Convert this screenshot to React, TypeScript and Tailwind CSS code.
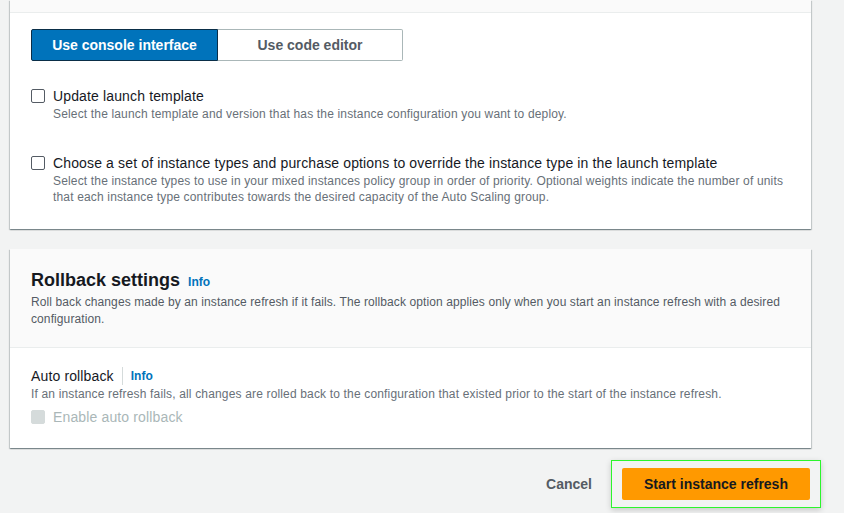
import React from 'react';

const font = { fontFamily: '"Liberation Sans", Arial, sans-serif' };

const Checkbox = ({ disabled = false }: { disabled?: boolean }) => (
  <span
    className={`mt-[3px] inline-block h-[14px] w-[14px] shrink-0 rounded-[2px] border ${
      disabled ? 'border-[#d5dbdb] bg-[#d5dbdb]' : 'border-[#545b64] bg-white'
    }`}
  />
);

const Info = () => (
  <a className="text-[12px] font-bold text-[#0073bb]">Info</a>
);

export default function App() {
  return (
    <div className="min-h-screen bg-[#f2f3f3] pl-[10px] pr-[33px] text-[#16191f]" style={font}>
      {/* Launch template panel */}
      <div className="bg-white shadow-[0_1px_1px_0_rgba(0,28,36,0.3),1px_1px_1px_0_rgba(0,28,36,0.15),-1px_1px_1px_0_rgba(0,28,36,0.15)]">
        <div className="h-[13px] border-b border-[#eaeded] bg-[#fafafa]" />
        <div className="px-[21px] pb-[24px] pt-[16px]">
          <div className="flex h-[32px] w-[372px] text-[14px] font-bold">
            <button className="w-[187px] rounded-l-[2px] border border-[#0a2e48] bg-[#0073bb] text-white">
              Use console interface
            </button>
            <button className="flex-1 rounded-r-[2px] border border-l-0 border-[#aab7b8] bg-white text-[#545b64]">
              Use code editor
            </button>
          </div>

          <div className="mt-[25px] flex gap-[8px]">
            <Checkbox />
            <div>
              <div className="text-[14px] leading-[20px] tracking-[0.14px]">Update launch template</div>
              <div className="text-[12px] leading-[16px] tracking-[0.16px] text-[#687078]">
                Select the launch template and version that has the instance configuration you want to deploy.
              </div>
            </div>
          </div>

          <div className="mt-[31px] flex gap-[8px]">
            <Checkbox />
            <div>
              <div className="text-[14px] leading-[20px] tracking-[0.14px]">
                Choose a set of instance types and purchase options to override the instance type in the launch template
              </div>
              <div className="text-[12px] leading-[16px] tracking-[0.16px] text-[#687078]">
                Select the instance types to use in your mixed instances policy group in order of priority. Optional weights indicate the number of units
                <br />
                that each instance type contributes towards the desired capacity of the Auto Scaling group.
              </div>
            </div>
          </div>
        </div>
      </div>

      {/* Rollback settings panel */}
      <div className="mt-[20px] bg-white shadow-[0_1px_1px_0_rgba(0,28,36,0.3),1px_1px_1px_0_rgba(0,28,36,0.15),-1px_1px_1px_0_rgba(0,28,36,0.15)]">
        <div className="border-b border-[#eaeded] bg-[#fafafa] px-[21px] pb-[19px] pt-[19px]">
          <div className="flex items-baseline gap-[8px]">
            <h2 className="text-[18px] font-bold leading-[24px]">Rollback settings</h2>
            <Info />
          </div>
          <p className="mt-[2px] text-[12px] leading-[17px] tracking-[0.1px] text-[#545b64]">
            Roll back changes made by an instance refresh if it fails. The rollback option applies only when you start an instance refresh with a desired
            <br />
            configuration.
          </p>
        </div>
        <div className="px-[21px] pb-[21px] pt-[18px]">
          <div className="flex items-center">
            <span className="text-[14px] leading-[20px] tracking-[0.14px]">Auto rollback</span>
            <span className="mx-[8px] h-[18px] w-px bg-[#d5dbdb]" />
            <Info />
          </div>
          <div className="text-[12px] leading-[16px] tracking-[0.16px] text-[#687078]">
            If an instance refresh fails, all changes are rolled back to the configuration that existed prior to the start of the instance refresh.
          </div>
          <div className="mt-[5px] flex gap-[8px]">
            <Checkbox disabled />
            <span className="text-[14px] leading-[20px] tracking-[0.14px] text-[#aab7b8]">Enable auto rollback</span>
          </div>
        </div>
      </div>

      {/* Footer actions */}
      <div className="mt-[12px] flex items-center justify-end gap-[19px] pb-[6px]">
        <button className="text-[14px] font-bold text-[#545b64]">Cancel</button>
        <div className="-mr-[10px] border-[1.5px] border-[#2cf52c] px-[10px] py-[7px] shadow-[0_2px_6px_rgba(0,0,0,0.18)]">
          <button className="h-[32px] w-[188px] rounded-[2px] bg-[#ff9900] text-[14px] font-bold text-[#16191f]">
            Start instance refresh
          </button>
        </div>
      </div>
    </div>
  );
}
